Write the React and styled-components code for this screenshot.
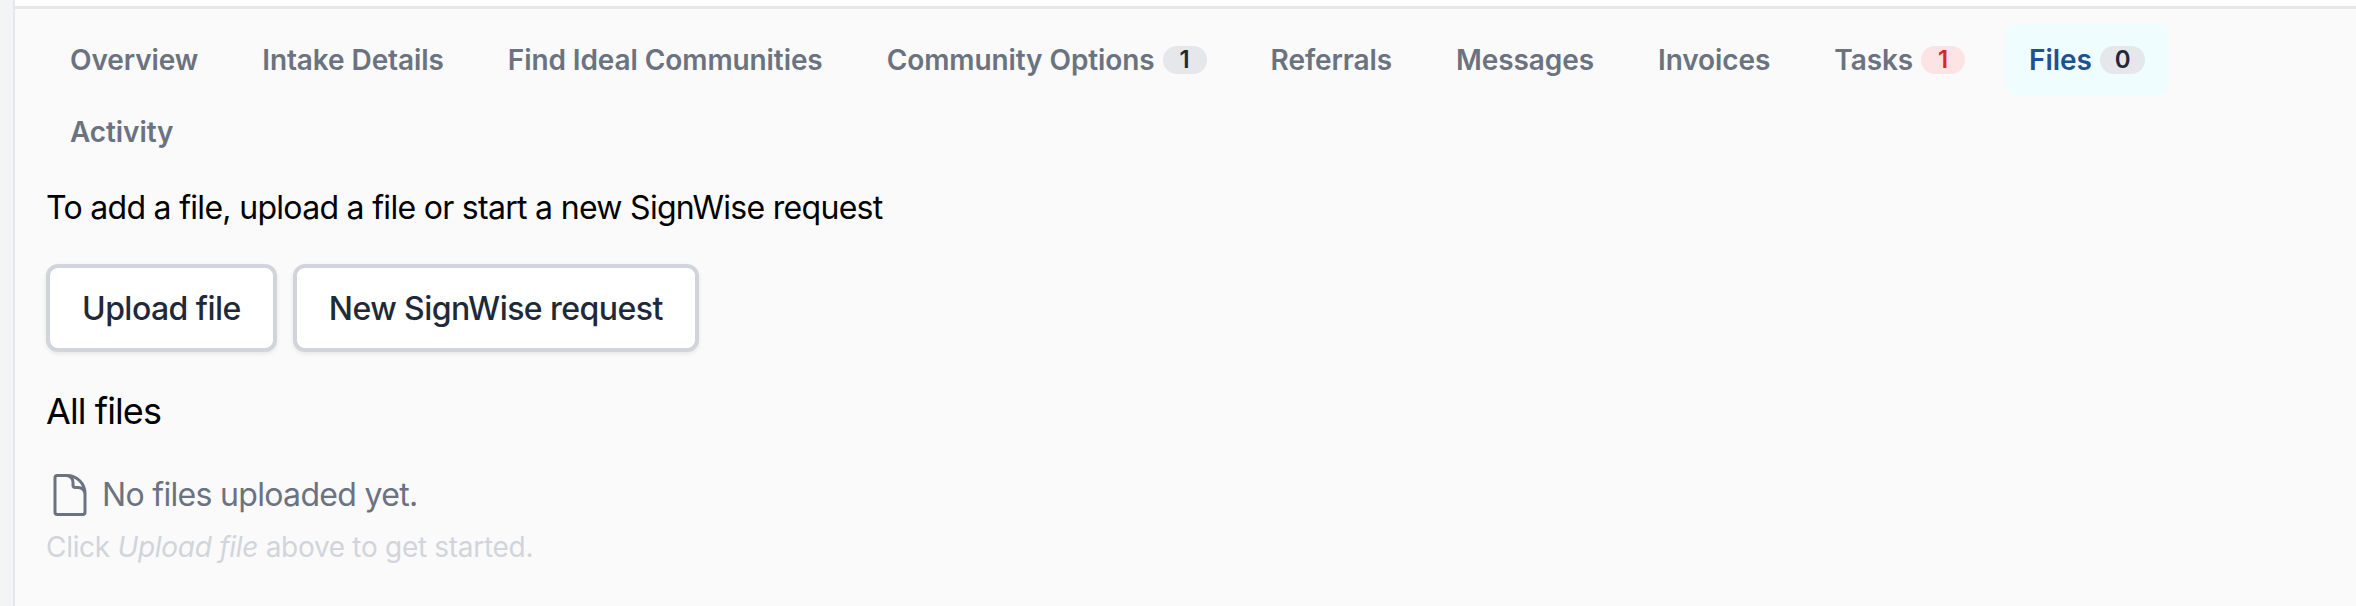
import React from "react";
import styled, { createGlobalStyle } from "styled-components";

const Global = createGlobalStyle`
  html, body { margin: 0; padding: 0; background: #f3f4f6; }
  body { font-family: Inter, "Liberation Sans", sans-serif; }
`;
const Frame = styled.div`
  width: 2356px; height: 606px; overflow: hidden;
  padding-left: 13px; box-sizing: border-box; background: #f3f4f6;
`;
const Panel = styled.main`
  height: 100%; box-sizing: border-box; background: #fafafa;
  border-left: 2px solid #e5e7eb; display: flex; flex-direction: column;
`;
const TopStrip = styled.div`
  height: 6px; flex: none; background: #fff; border-bottom: 3px solid #e5e7eb;
`;
const Content = styled.div`
  padding: 15px 0 0 31px; display: flex; flex-direction: column; align-items: flex-start;
`;
const Tabs = styled.nav`
  display: flex; flex-wrap: wrap; column-gap: 16px; width: 2200px;
`;
const Tab = styled.a`
  display: flex; align-items: center; height: 72px; padding: 0 24px; box-sizing: border-box;
  font-size: 28px; font-weight: 600; line-height: 40px; letter-spacing: -0.09px; border-radius: 12px;
  color: ${(p) => (p.$active ? "#1e5190" : "#6b7280")};
  background: ${(p) => (p.$active ? "#f0fdff" : "transparent")};
`;
const Badge = styled.span`
  margin-left: 8px; min-width: 44px; box-sizing: border-box; padding: 0 15px; height: 28px;
  display: inline-flex; align-items: center; justify-content: center; border-radius: 14px;
  font-size: 24px; font-weight: 600;
  color: ${(p) => (p.$red ? "#dc2626" : "#1f2937")};
  background: ${(p) => (p.$red ? "#fce4e4" : "#e5e7eb")};
`;
const Intro = styled.p`
  margin: 16px 0 0; font-size: 32px; line-height: 48px; letter-spacing: -0.7px; color: #000;
`;
const Actions = styled.div`
  display: flex; gap: 16px; margin-top: 32px;
`;
const Button = styled.button`
  height: 88px; padding: 0 32px; background: #fff; border: 4px solid #d1d5db; border-radius: 12px;
  box-shadow: 0 2px 4px rgba(0,0,0,.08);
  font: 500 32px Inter, sans-serif; letter-spacing: -0.55px; color: #1f2937;
`;
const Heading = styled.h2`
  margin: 35px 0 0; font-size: 36px; font-weight: 400; line-height: 48px; letter-spacing: -0.9px; color: #000;
`;
const Empty = styled.div`
  display: flex; align-items: center; gap: 8px; margin-top: 36px;
  font-size: 32px; line-height: 48px; letter-spacing: -0.68px; color: #6b7280;
`;
const Hint = styled.p`
  margin: 8px 0 0; font-size: 28px; line-height: 40px; letter-spacing: -0.3px; color: #d1d5db;
`;

const FileIcon = () => (
  <svg width="48" height="48" viewBox="0 0 24 24" fill="none" stroke="#6b7280" strokeWidth="1.5" strokeLinecap="round" strokeLinejoin="round">
    <path d="M19.5 14.25v-2.625a3.375 3.375 0 00-3.375-3.375h-1.5A1.125 1.125 0 0113.5 7.125v-1.5a3.375 3.375 0 00-3.375-3.375H8.25m2.25 0H5.625c-.621 0-1.125.504-1.125 1.125v17.25c0 .621.504 1.125 1.125 1.125h12.75c.621 0 1.125-.504 1.125-1.125V11.25a9 9 0 00-9-9z" />
  </svg>
);

const tabs = [
  ["Overview"], ["Intake Details"], ["Find Ideal Communities"], ["Community Options", "1"],
  ["Referrals"], ["Messages"], ["Invoices"], ["Tasks", "1", true], ["Files", "0", false, true], ["Activity"],
];

export default function App() {
  return (
    <Frame>
      <Global />
      <Panel>
        <TopStrip />
        <Content>
          <Tabs>
            {tabs.map(([label, n, red, active]) => (
              <Tab key={label} $active={active}>
                {label}
                {n && <Badge $red={red}>{n}</Badge>}
              </Tab>
            ))}
          </Tabs>
          <Intro>To add a file, upload a file or start a new SignWise request</Intro>
          <Actions>
            <Button>Upload file</Button>
            <Button>New SignWise request</Button>
          </Actions>
          <Heading>All files</Heading>
          <Empty><FileIcon />No files uploaded yet.</Empty>
          <Hint>Click <em>Upload file</em> above to get started.</Hint>
        </Content>
      </Panel>
    </Frame>
  );
}
